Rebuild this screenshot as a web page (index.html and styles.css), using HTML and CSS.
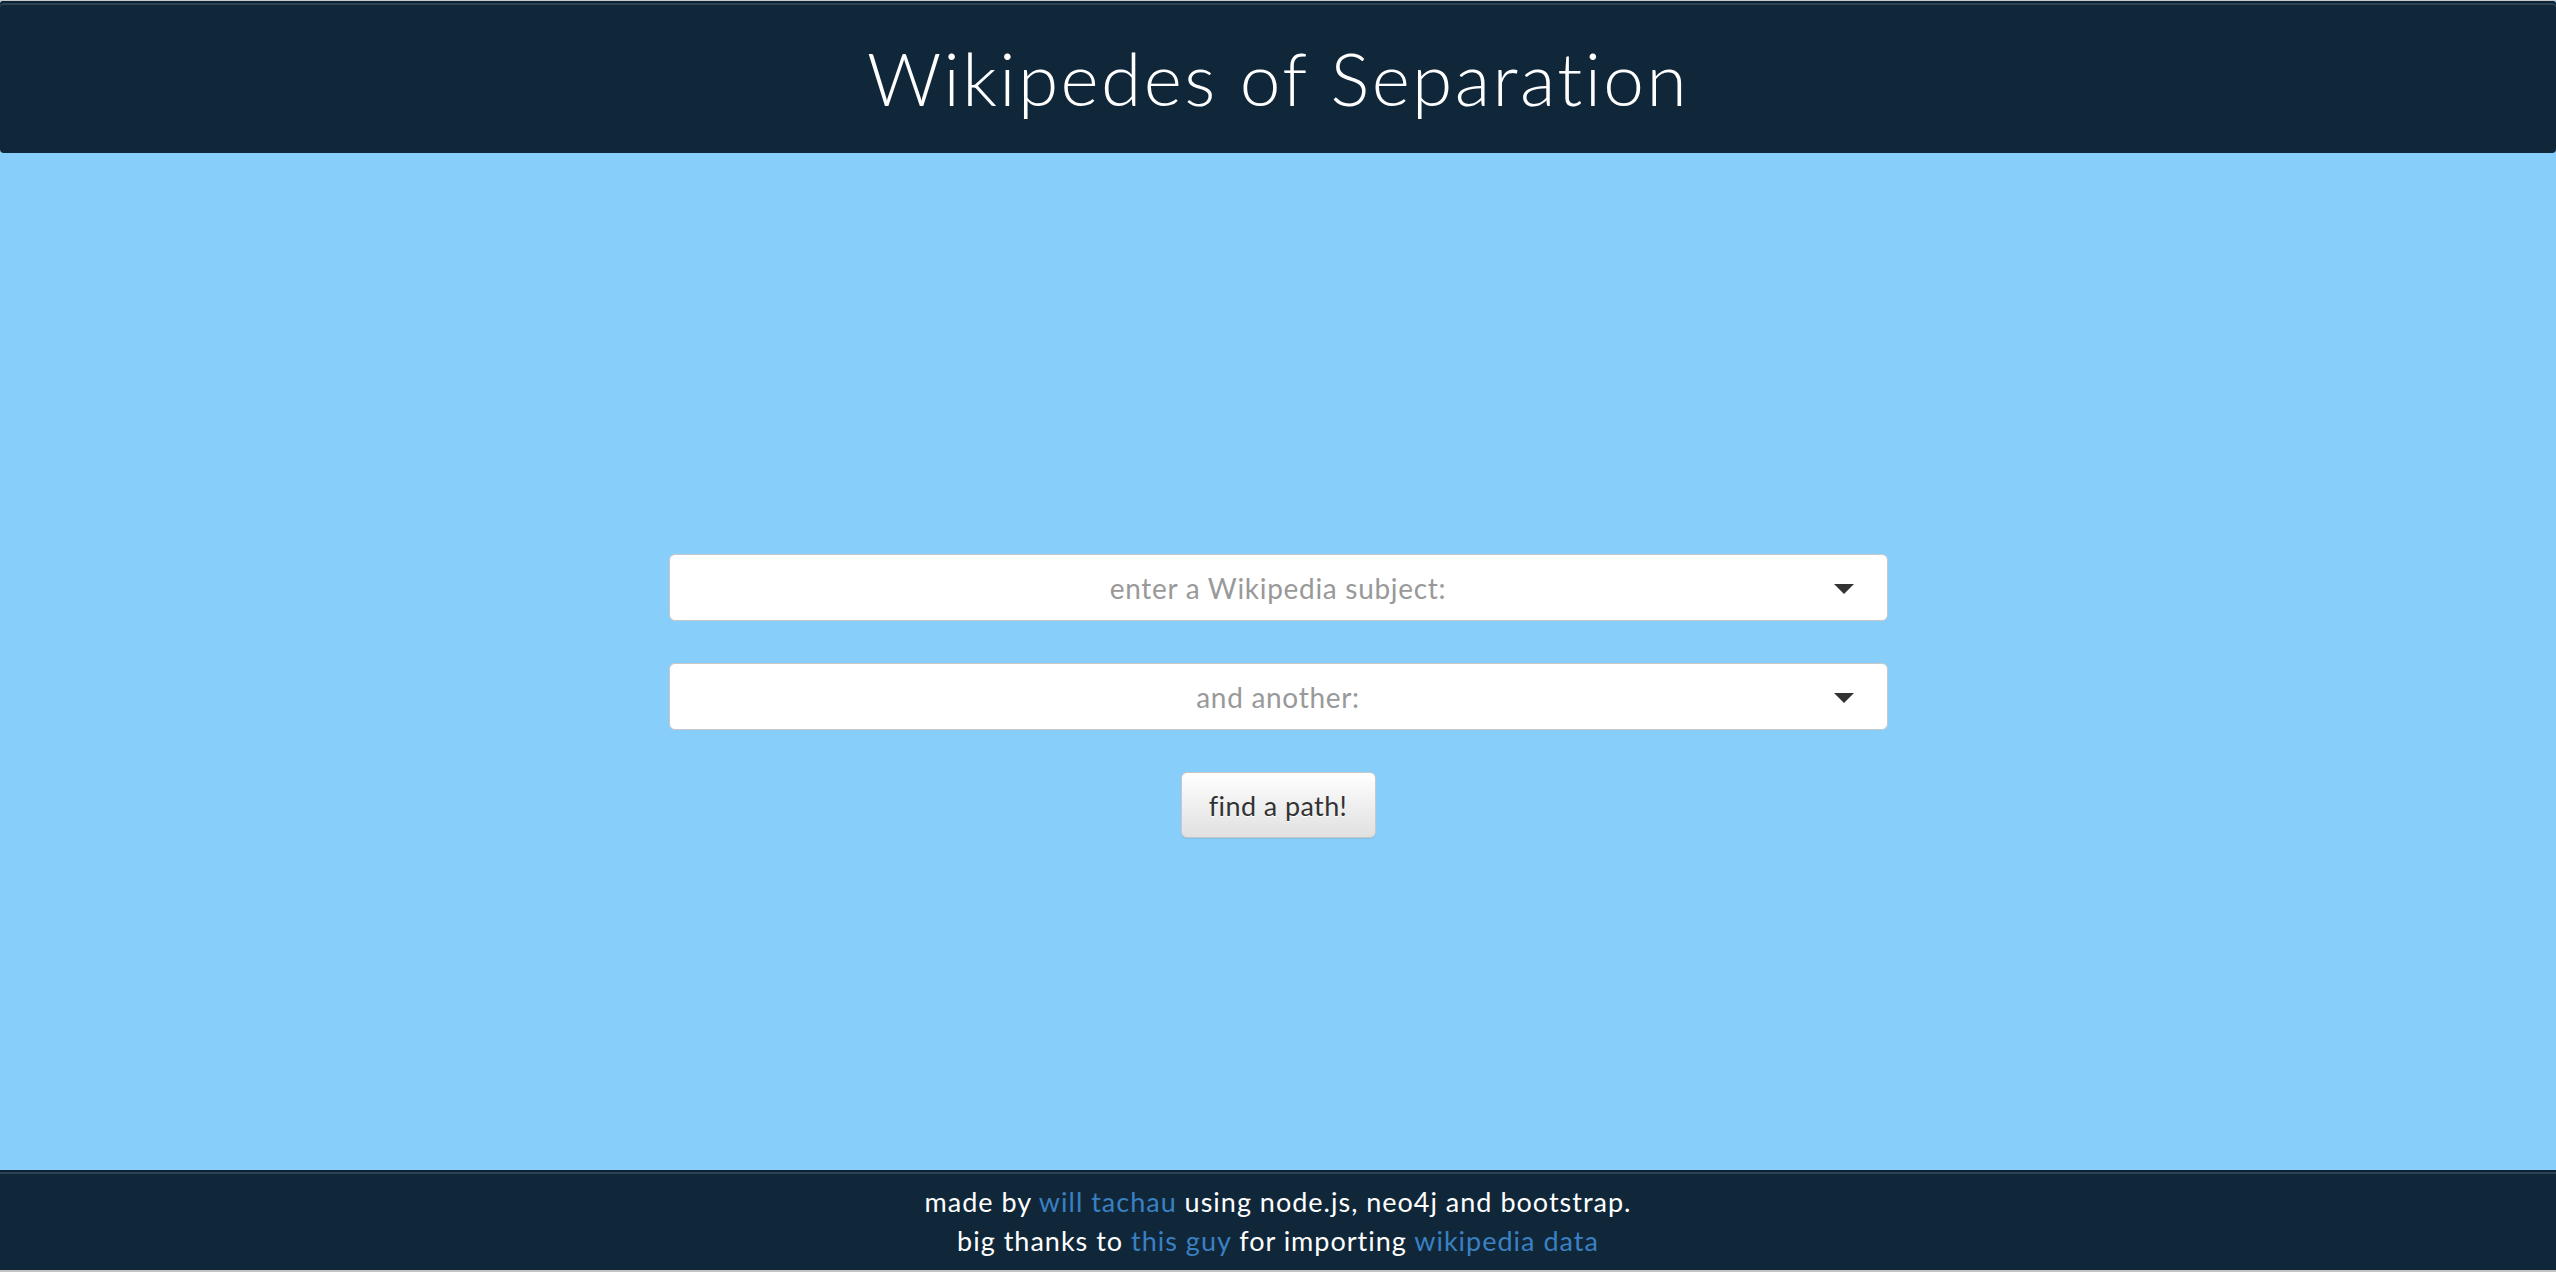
FILE: index.html
```html
<!DOCTYPE html>
<html>
<head>
<meta charset="utf-8">
<title>Wikipedes of Separation</title>
<link rel="stylesheet" href="styles.css">
</head>
<body>
<header class="topbar">
  <h1 class="title">Wikipedes of Separation</h1>
</header>
<main class="content">
  <form class="search">
    <div class="select">
      <span class="placeholder">enter a Wikipedia subject:</span>
      <span class="caret"></span>
    </div>
    <div class="select">
      <span class="placeholder">and another:</span>
      <span class="caret"></span>
    </div>
    <button type="button" class="btn">find a path!</button>
  </form>
</main>
<footer class="footer">
  <p class="line">made by <a href="#">will tachau</a> using node.js, neo4j and bootstrap.</p>
  <p class="line">big thanks to <a href="#">this guy</a> for importing <a href="#">wikipedia data</a></p>
</footer>
</body>
</html>
```
FILE: styles.css
```css
html, body {
  margin: 0;
  padding: 0;
  height: 100%;
}
body {
  background: #87cefa;
  font-family: Lato, "Open Sans", sans-serif;
  display: flex;
  flex-direction: column;
  box-sizing: border-box;
  border-top: 1px solid #c9c9c9;
  border-bottom: 2px solid #c4c4c4;
}
.topbar {
  height: 152px;
  flex: none;
  background: #10273a;
  border-radius: 4px;
  box-shadow: inset 0 2px 0 #0c2132, inset 0 4px 0 #2b4354;
  display: flex;
  align-items: center;
  justify-content: center;
}
.title {
  margin: 0;
  color: #ffffff;
  font-weight: 300;
  font-size: 73px;
  letter-spacing: 2.4px;
  line-height: 1;
  padding-top: 2px;
}
.content {
  flex: 1;
  display: flex;
  justify-content: center;
  padding-top: 401px;
}
.search {
  width: 1219px;
  display: flex;
  flex-direction: column;
  align-items: center;
  gap: 42px;
}
.select {
  box-sizing: border-box;
  width: 100%;
  height: 67px;
  background: #fff;
  border: 1px solid #c8c8c8;
  border-radius: 6px;
  display: flex;
  align-items: center;
  justify-content: center;
  position: relative;
}
.placeholder {
  color: #999;
  font-size: 28px;
  font-weight: 400;
  letter-spacing: 0.7px;
}
.caret {
  position: absolute;
  right: 33px;
  top: 29px;
  width: 0;
  height: 0;
  border-left: 10px solid transparent;
  border-right: 10px solid transparent;
  border-top: 10px solid #333;
}
.btn {
  box-sizing: border-box;
  width: 195px;
  height: 66px;
  border: 1px solid #c8c8c8;
  border-radius: 6px;
  background: linear-gradient(to bottom, #ffffff 0%, #e0e0e0 100%);
  color: #333;
  font-family: Lato, "Open Sans", sans-serif;
  font-size: 27px;
  letter-spacing: 0.4px;
  text-shadow: 0 1px 0 #fff;
  box-shadow: inset 0 1px 0 rgba(255,255,255,.15), 0 1px 1px rgba(0,0,0,.075);
  padding: 0;
}
.footer {
  flex: none;
  height: 100px;
  background: #10273a;
  box-shadow: inset 0 2px 0 #0c2132, inset 0 4px 0 #2b4354;
  color: #fff;
  text-align: center;
  font-size: 27px;
  letter-spacing: 1px;
  padding-top: 12px;
  box-sizing: border-box;
}
.line {
  margin: 0;
  line-height: 39px;
}
.footer a {
  color: #3a80c2;
  text-decoration: none;
}
```
